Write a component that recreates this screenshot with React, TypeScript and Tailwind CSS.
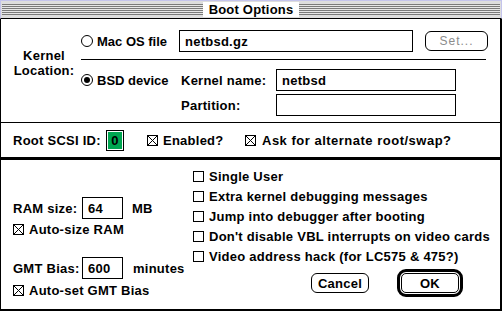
import type { ReactNode } from "react";

function Radio({ on }: { on?: boolean }) {
  return (
    <span className="flex h-[12px] w-[12px] shrink-0 items-center justify-center rounded-full border border-black bg-white">
      {on && <span className="h-[6px] w-[6px] rounded-full bg-black" />}
    </span>
  );
}

function Check({ on }: { on?: boolean }) {
  return (
    <svg width="11" height="11" viewBox="0 0 11 11" className="shrink-0" shapeRendering="crispEdges">
      <rect x="0.5" y="0.5" width="10" height="10" fill="white" stroke="black" />
      {on && <path d="M1 1L10 10M10 1L1 10" stroke="black" strokeWidth="1" shapeRendering="auto" />}
    </svg>
  );
}

function Field({ w, children }: { w: string; children?: ReactNode }) {
  return (
    <div className={`flex h-[22px] shrink-0 items-center border border-black bg-white pl-[5px] ${w}`}>
      {children}
    </div>
  );
}

export default function App() {
  return (
    <div className="h-[312px] w-[503px] bg-white font-['Liberation_Sans',Arial,sans-serif] text-[13px] font-bold leading-none tracking-[0.25px] text-black">
      <div className="flex h-[311px] w-[502px] flex-col">
        {/* Title bar */}
        <div className="flex h-[19px] items-center border-x border-t border-b border-x-[#c4c4ec] border-t-[#c4c4ec] border-b-black bg-[#dddddd] px-[1px]">
          <div className="h-[11px] flex-1 bg-[repeating-linear-gradient(to_bottom,#7a7a7a_0px,#7a7a7a_1px,#e6e6e6_1px,#e6e6e6_2px)]" />
          <div className="flex h-[15px] items-center bg-white px-[6px] tracking-[0.2px]">Boot Options</div>
          <div className="h-[11px] flex-1 bg-[repeating-linear-gradient(to_bottom,#7a7a7a_0px,#7a7a7a_1px,#e6e6e6_1px,#e6e6e6_2px)]" />
        </div>

        <div className="flex flex-1 flex-col border-b-2 border-l border-r-2 border-black">
          {/* Kernel location */}
          <div className="flex h-[103px]">
            <div className="ml-[12px] flex w-[62px] flex-col items-center pt-[29px] leading-[15px]">
              <span>Kernel</span>
              <span>Location:</span>
            </div>
            <div className="ml-[6px] flex flex-col pt-[11px]">
              <div className="flex h-[22px] items-center">
                <div className="flex w-[98px] items-center gap-[4px] tracking-normal">
                  <Radio />
                  <span>Mac OS file</span>
                </div>
                <Field w="w-[234px]">netbsd.gz</Field>
                <div className="ml-[12px] flex h-[20px] w-[63px] items-center justify-center rounded-[6px] border border-black text-[12px] font-normal tracking-[1px] text-[#8c8c8c]">
                  Set...
                </div>
              </div>
              <div className="mt-[7px] h-px w-[405px] bg-black" />
              <div className="mt-[9px] flex h-[22px] items-center">
                <div className="flex w-[98px] items-center gap-[4px] tracking-normal">
                  <Radio on />
                  <span>BSD device</span>
                </div>
                <span className="w-[97px] pl-[2px]">Kernel name:</span>
                <Field w="w-[180px]">netbsd</Field>
              </div>
              <div className="mt-[3px] flex h-[22px] items-center">
                <span className="ml-[98px] w-[97px] pl-[2px]">Partition:</span>
                <Field w="w-[180px]" />
              </div>
            </div>
          </div>
          <div className="h-px bg-black" />

          {/* Root SCSI row */}
          <div className="flex h-[34px] items-center pl-[12px]">
            <span className="w-[93px]">Root SCSI ID:</span>
            <div className="h-[21px] w-[18px] border border-black p-px">
              <div className="flex h-full items-center justify-center bg-[#00a651]">0</div>
            </div>
            <div className="ml-[23px] flex w-[98px] items-center gap-[5px]">
              <Check on />
              <span>Enabled?</span>
            </div>
            <div className="flex items-center gap-[6px]">
              <Check on />
              <span className="tracking-[0.5px]">Ask for alternate root/swap?</span>
            </div>
          </div>
          <div className="h-[3px] bg-black" />

          {/* Lower section */}
          <div className="flex flex-1">
            <div className="flex w-[192px] flex-col pl-[12px] pt-[37px]">
              <div className="flex h-[22px] items-center">
                <span className="w-[69px]">RAM size:</span>
                <Field w="w-[41px]">64</Field>
                <span className="ml-[9px]">MB</span>
              </div>
              <div className="mt-[2px] flex h-[16px] items-center gap-[5px]">
                <Check on />
                <span>Auto-size RAM</span>
              </div>
              <div className="mt-[20px] flex h-[22px] items-center">
                <span className="w-[69px]">GMT Bias:</span>
                <Field w="w-[41px]">600</Field>
                <span className="ml-[10px]">minutes</span>
              </div>
              <div className="mt-[3px] flex h-[16px] items-center gap-[5px]">
                <Check on />
                <span>Auto-set GMT Bias</span>
              </div>
            </div>

            <div className="flex flex-col pt-[6px]">
              {[
                "Single User",
                "Extra kernel debugging messages",
                "Jump into debugger after booting",
                "Don't disable VBL interrupts on video cards",
                "Video address hack (for LC575 & 475?)",
              ].map((label) => (
                <div key={label} className="flex h-[20px] items-center gap-[5px]">
                  <Check />
                  <span>{label}</span>
                </div>
              ))}
              <div className="mt-[3px] flex h-[28px] items-center">
                <div className="ml-[118px] flex h-[20px] w-[58px] items-center justify-center rounded-[6px] border border-black">
                  Cancel
                </div>
                <div className="ml-[28px] h-[28px] w-[66px] rounded-[9px] border-[3px] border-black p-px">
                  <div className="flex h-full w-full items-center justify-center rounded-[5px] border border-black">
                    OK
                  </div>
                </div>
              </div>
            </div>
          </div>
        </div>
      </div>
    </div>
  );
}
